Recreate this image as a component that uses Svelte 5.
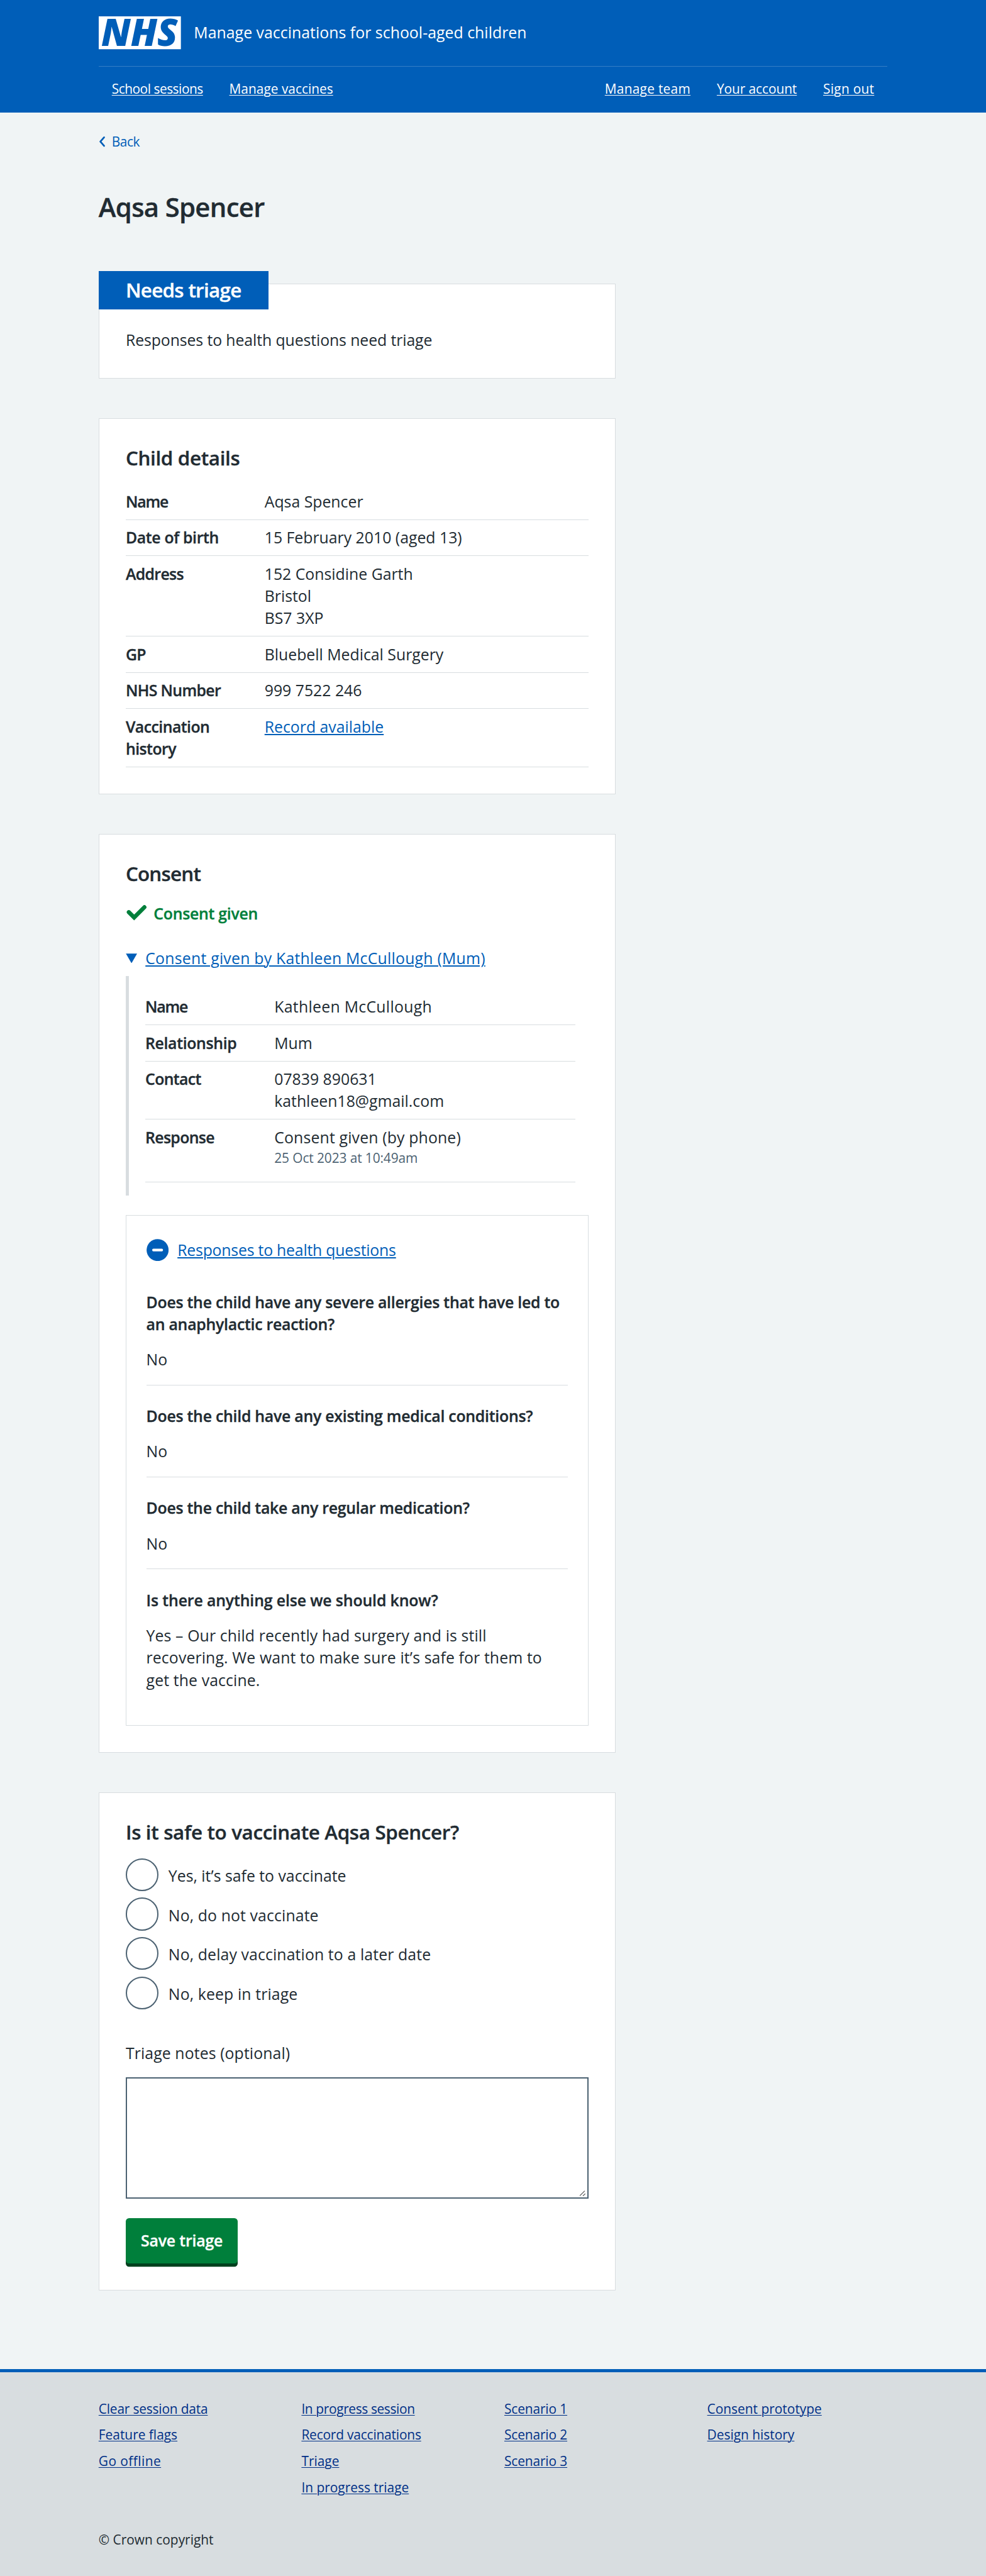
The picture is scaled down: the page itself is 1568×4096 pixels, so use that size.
<script>
  const primaryNav = ['School sessions', 'Manage vaccines'];
  const accountNav = ['Manage team', 'Your account', 'Sign out'];
  const child = [
    { key: 'Name', lines: ['Aqsa Spencer'] },
    { key: 'Date of birth', lines: ['15 February 2010 (aged 13)'] },
    { key: 'Address', lines: ['152 Considine Garth', 'Bristol', 'BS7 3XP'] },
    { key: 'GP', lines: ['Bluebell Medical Surgery'] },
    { key: 'NHS Number', lines: ['999 7522 246'] },
    { key: 'Vaccination history', link: 'Record available' }
  ];
  const parent = [
    { key: 'Name', lines: ['Kathleen McCullough'] },
    { key: 'Relationship', lines: ['Mum'] },
    { key: 'Contact', lines: ['07839 890631', 'kathleen18@gmail.com'] },
    { key: 'Response', lines: ['Consent given (by phone)'], note: '25 Oct 2023 at 10:49am' }
  ];
  const health = [
    { q: 'Does the child have any severe allergies that have led to an anaphylactic reaction?', a: 'No' },
    { q: 'Does the child have any existing medical conditions?', a: 'No' },
    { q: 'Does the child take any regular medication?', a: 'No' },
    {
      q: 'Is there anything else we should know?',
      a: 'Yes – Our child recently had surgery and is still recovering. We want to make sure it’s safe for them to get the vaccine.'
    }
  ];
  const outcomes = [
    'Yes, it’s safe to vaccinate',
    'No, do not vaccinate',
    'No, delay vaccination to a later date',
    'No, keep in triage'
  ];
  const footer = [
    ['Clear session data', 'Feature flags', 'Go offline'],
    ['In progress session', 'Record vaccinations', 'Triage', 'In progress triage'],
    ['Scenario 1', 'Scenario 2', 'Scenario 3'],
    ['Consent prototype', 'Design history']
  ];
</script>

{#snippet summary(rows)}
  <dl class="summary">
    {#each rows as row}
      <div class="row">
        <dt>{row.key}</dt>
        <dd>
          {#each row.lines ?? [] as line}<div>{line}</div>{/each}
          {#if row.link}<a href="#record">{row.link}</a>{/if}
          {#if row.note}<div class="note">{row.note}</div>{/if}
        </dd>
      </div>
    {/each}
  </dl>
{/snippet}

<header class="header">
  <div class="container">
    <div class="brand">
      <svg class="logo" viewBox="0 0 100 40" role="img" aria-label="NHS">
        <rect width="100" height="40" fill="#fff" />
        <text x="3" y="36.2" textLength="93" lengthAdjust="spacingAndGlyphs">NHS</text>
      </svg>
      <span class="service">Manage vaccinations for school-aged children</span>
    </div>
    <nav class="nav">
      <div class="links primary">
        {#each primaryNav as item}<a href="#nav">{item}</a>{/each}
      </div>
      <div class="links account">
        {#each accountNav as item}<a href="#nav">{item}</a>{/each}
      </div>
    </nav>
  </div>
</header>

<main class="container main">
  <a class="back" href="#back">
    <svg viewBox="0 0 8 14"><path d="M6.5 1.8 L2 7 L6.5 12.2" /></svg>
    <span>Back</span>
  </a>
  <h1>Aqsa Spencer</h1>

  <div class="column">
    <section class="card status">
      <h2 class="badge">Needs triage</h2>
      <p>Responses to health questions need triage</p>
    </section>

    <section class="card">
      <h2>Child details</h2>
      {@render summary(child)}
    </section>

    <section class="card">
      <h2 class="consent">Consent</h2>
      <p class="given">
        <svg viewBox="0 0 26 20"><polyline points="3.7,8.7 10.2,15.2 22.7,2.7" /></svg>
        <span>Consent given</span>
      </p>
      <div class="details">
        <div class="toggle">
          <svg viewBox="0 0 14 12"><path d="M0.2 0.2 H13.8 L7 12 Z" /></svg>
          <a class="wide" href="#details">Consent given by Kathleen McCullough (Mum)</a>
        </div>
        <div class="inset">{@render summary(parent)}</div>
      </div>
      <div class="expander">
        <div class="expander-title">
          <svg viewBox="0 0 27 27">
            <circle cx="13.5" cy="13.5" r="13.4" />
            <rect x="6.9" y="11.9" width="13.2" height="3.2" rx="1.5" />
          </svg>
          <a href="#health">Responses to health questions</a>
        </div>
        {#each health as item}
          <div class="question">
            <h3>{item.q}</h3>
            <p>{item.a}</p>
          </div>
        {/each}
      </div>
    </section>

    <section class="card form">
      <h2>Is it safe to vaccinate Aqsa Spencer?</h2>
      <div class="radios">
        {#each outcomes as outcome}
          <label><span class="radio"></span><span class="radio-text">{outcome}</span></label>
        {/each}
      </div>
      <div class="label">Triage notes (optional)</div>
      <div class="textarea">
        <svg viewBox="0 0 8 8"><path d="M0.8 7.2 L6.8 1.2 M4.6 7.4 L7.4 4.7" /></svg>
      </div>
      <button type="button">Save triage</button>
    </section>
  </div>
</main>

<footer class="footer">
  <div class="container">
    <div class="columns">
      {#each footer as column}
        <ul>
          {#each column as item}<li><a href="#footer">{item}</a></li>{/each}
        </ul>
      {/each}
    </div>
    <p>© Crown copyright</p>
  </div>
</footer>

<style>
  :global(html) {
    font-size: 13.06667px;
  }
  :global(body) {
    margin: 0;
    background: #f0f4f5;
    color: #212b32;
    font: 1.9rem/2.7rem "Open Sans", "Noto Sans", sans-serif;
  }
  h1, h2, h3, p, dl, dd, ul {
    margin: 0;
    padding: 0;
  }
  h1, h2, h3, dt, button, .given span {
    font-weight: 600;
    -webkit-text-stroke: 0.35px currentColor;
  }
  a {
    color: #005eb8;
    text-decoration: underline 2px;
    text-underline-offset: 0.15rem;
  }
  svg {
    display: block;
    flex: none;
  }
  .container {
    width: 96rem;
    margin: 0 auto;
  }

  .header {
    height: 13.7rem;
    background: #005eb8;
    color: #fff;
  }
  .brand {
    box-sizing: border-box;
    height: 8rem;
    padding: 2rem 0;
    display: flex;
    align-items: center;
    gap: 1.6rem;
  }
  .logo {
    width: 10rem;
    height: 4rem;
    overflow: visible;
  }
  .logo text {
    font: italic 800 45.5px "Open Sans", sans-serif;
    fill: #005eb8;
  }
  .service {
    line-height: 4rem;
    margin-top: -0.1rem;
    letter-spacing: 0.003rem;
  }
  .nav {
    display: flex;
    justify-content: space-between;
    box-sizing: border-box;
    height: 5.7rem;
    padding: 1.6rem 1.6rem 0;
    border-top: 1px solid #347ec6;
    font-size: 1.6rem;
    line-height: 2.4rem;
  }
  .links {
    display: flex;
    gap: 3.2rem;
  }
  .primary a:first-child {
    letter-spacing: -0.037rem;
  }
  .account a {
    letter-spacing: 0.02rem;
  }
  .account a:nth-child(2) {
    letter-spacing: -0.006rem;
  }
  .nav a {
    color: #fff;
    text-decoration-thickness: 1px;
  }

  .main {
    padding: 2.35rem 0 9.6rem;
  }
  .back {
    display: flex;
    align-items: center;
    gap: 0.8rem;
    font-size: 1.6rem;
    line-height: 2.4rem;
    letter-spacing: -0.035rem;
    text-decoration: none;
  }
  .back svg {
    width: 0.8rem;
    height: 1.4rem;
  }
  .back path {
    fill: none;
    stroke: #005eb8;
    stroke-width: 2.1;
    stroke-linecap: round;
    stroke-linejoin: round;
  }
  h1 {
    margin: 4.76rem 0 7.29rem;
    font-size: 3.2rem;
    line-height: 4rem;
    letter-spacing: -0.05rem;
  }
  .column {
    width: 62.93rem;
    display: flex;
    flex-direction: column;
    gap: 4.8rem;
  }
  .card {
    box-sizing: border-box;
    padding: calc(3.22rem - 1px) calc(3.3rem - 1px) calc(3.3rem - 1px);
    border: 1px solid #d8dde0;
    background: #fff;
  }
  h2 {
    font-size: 2.4rem;
    line-height: 3.2rem;
    letter-spacing: -0.026rem;
  }
  .consent {
    letter-spacing: -0.06rem;
  }
  .status {
    padding-top: 0;
    padding-bottom: calc(3.34rem - 1px);
  }
  .badge {
    width: max-content;
    margin: -1.6rem 0 2.36rem calc(-3.3rem);
    padding: 0.7rem 3.3rem 0.8rem;
    background: #005eb8;
    color: #fff;
    letter-spacing: -0.053rem;
  }
  .status p {
    letter-spacing: -0.007rem;
  }

  .summary {
    margin-top: 1.58rem;
  }
  .row {
    display: grid;
    grid-template-columns: 30% 1fr;
    padding: 0.8rem 0 calc(0.9rem - 1px);
    border-bottom: 1px solid #d8dde0;
  }
  dt {
    padding-right: 2.4rem;
    letter-spacing: -0.048rem;
  }
  .row:first-child dt {
    letter-spacing: -0.09rem;
  }
  .row:nth-child(2) dt {
    letter-spacing: -0.025rem;
  }
  .row:nth-child(6) dt {
    letter-spacing: -0.04rem;
  }
  .note {
    margin-bottom: 0.8rem;
    color: #4c6272;
    font-size: 1.6rem;
    line-height: 2.4rem;
    letter-spacing: -0.008rem;
  }

  .given {
    display: flex;
    align-items: center;
    gap: 0.8rem;
    margin-top: 1.9rem;
    color: #007f3b;
    letter-spacing: -0.02rem;
  }
  .given svg {
    width: 2.6rem;
    height: 2rem;
  }
  .given polyline {
    fill: none;
    stroke: #007f3b;
    stroke-width: 5;
    stroke-linecap: round;
    stroke-miterlimit: 10;
  }
  .details {
    margin: 2.76rem 0 2.4rem;
  }
  .toggle {
    display: flex;
    align-items: center;
    gap: 1rem;
  }
  .toggle svg {
    width: 1.4rem;
    height: 1.2rem;
  }
  .toggle path,
  .expander circle {
    fill: #005eb8;
  }
  .wide {
    letter-spacing: 0.018rem;
  }
  .inset {
    margin-top: 0.82rem;
    padding: 1.6rem 1.6rem 1.6rem 2rem;
    border-left: 0.4rem solid #d8dde0;
  }
  .inset .summary {
    margin-top: 0;
  }
  .inset .row:first-child dd {
    letter-spacing: 0.022rem;
  }
  .inset .row:nth-child(4) dd > :first-child {
    letter-spacing: 0.012rem;
  }

  .expander {
    box-sizing: border-box;
    padding: calc(2.92rem - 1px) calc(2.5rem - 1px) calc(2.44rem - 1px);
    border: 1px solid #d8dde0;
  }
  .expander-title {
    display: flex;
    align-items: center;
    gap: 1.1rem;
    margin-bottom: 1.2rem;
    letter-spacing: -0.016rem;
  }
  .expander-title svg {
    width: 2.7rem;
    height: 2.7rem;
  }
  .expander rect {
    fill: #fff;
  }
  .question {
    padding: 2.4rem 0 calc(1.8rem - 1px);
    border-bottom: 1px solid #d8dde0;
  }
  .question:last-child {
    border-bottom-color: transparent;
  }
  .question p {
    padding-right: 1.5rem;
    letter-spacing: 0.009rem;
  }
  h3 {
    margin-bottom: 1.6rem;
    font-size: inherit;
    letter-spacing: -0.018rem;
  }
  .question:last-child h3 {
    letter-spacing: -0.009rem;
  }

  .form {
    padding-bottom: calc(2.9rem - 1px);
  }
  .radios {
    display: flex;
    flex-direction: column;
    gap: 0.8rem;
    margin: 1.58rem 0 4rem;
    letter-spacing: 0.009rem;
  }
  label {
    display: flex;
    gap: 1.2rem;
  }
  label:first-child {
    letter-spacing: 0;
  }
  .radio {
    box-sizing: border-box;
    width: 4rem;
    height: 4rem;
    border: 2.6px solid #4c6272;
    border-radius: 50%;
  }
  .radio-text {
    padding-top: 0.8rem;
  }
  .label {
    letter-spacing: 0.008rem;
  }
  .textarea {
    display: flex;
    align-items: flex-end;
    justify-content: flex-end;
    box-sizing: border-box;
    height: 14.7rem;
    margin: 1.6rem 0 2.4rem;
    padding: 0.1rem 0.2rem;
    border: 2.6px solid #4c6272;
  }
  .textarea svg {
    width: 0.8rem;
    height: 0.8rem;
  }
  .textarea path {
    fill: none;
    stroke: #555;
    stroke-width: 0.9;
  }
  button {
    display: block;
    width: 13.65rem;
    height: 5.5rem;
    margin: 0 0 0.4rem;
    padding: 0;
    border: 0;
    border-radius: 0.4rem;
    background: #007f3b;
    box-shadow: 0 0.4rem 0 #00401e;
    color: #fff;
    font: 600 1.9rem/5.3rem "Open Sans", "Noto Sans", sans-serif;
    letter-spacing: -0.013rem;
  }

  .footer {
    box-sizing: border-box;
    height: 25.2rem;
    padding-top: calc(3.62rem - 5px);
    border-top: 5px solid #005eb8;
    background: #d8dde0;
    font-size: 1.6rem;
    line-height: 2.4rem;
  }
  .columns {
    display: grid;
    grid-template-columns: repeat(4, 21.92rem);
    column-gap: 2.77rem;
    height: 15.98rem;
  }
  ul {
    display: flex;
    flex-direction: column;
    gap: 0.8rem;
    list-style: none;
  }
  .footer a {
    color: #003087;
    text-decoration-thickness: 1px;
  }
  ul:nth-child(1) li:nth-child(1),
  ul:nth-child(2) li:nth-child(2) {
    letter-spacing: -0.014rem;
  }
  ul:nth-child(2) li:nth-child(1) {
    letter-spacing: -0.028rem;
  }
  ul:nth-child(1) li:nth-child(3) {
    letter-spacing: 0.034rem;
  }
  ul:nth-child(3) {
    letter-spacing: -0.01rem;
  }
</style>
